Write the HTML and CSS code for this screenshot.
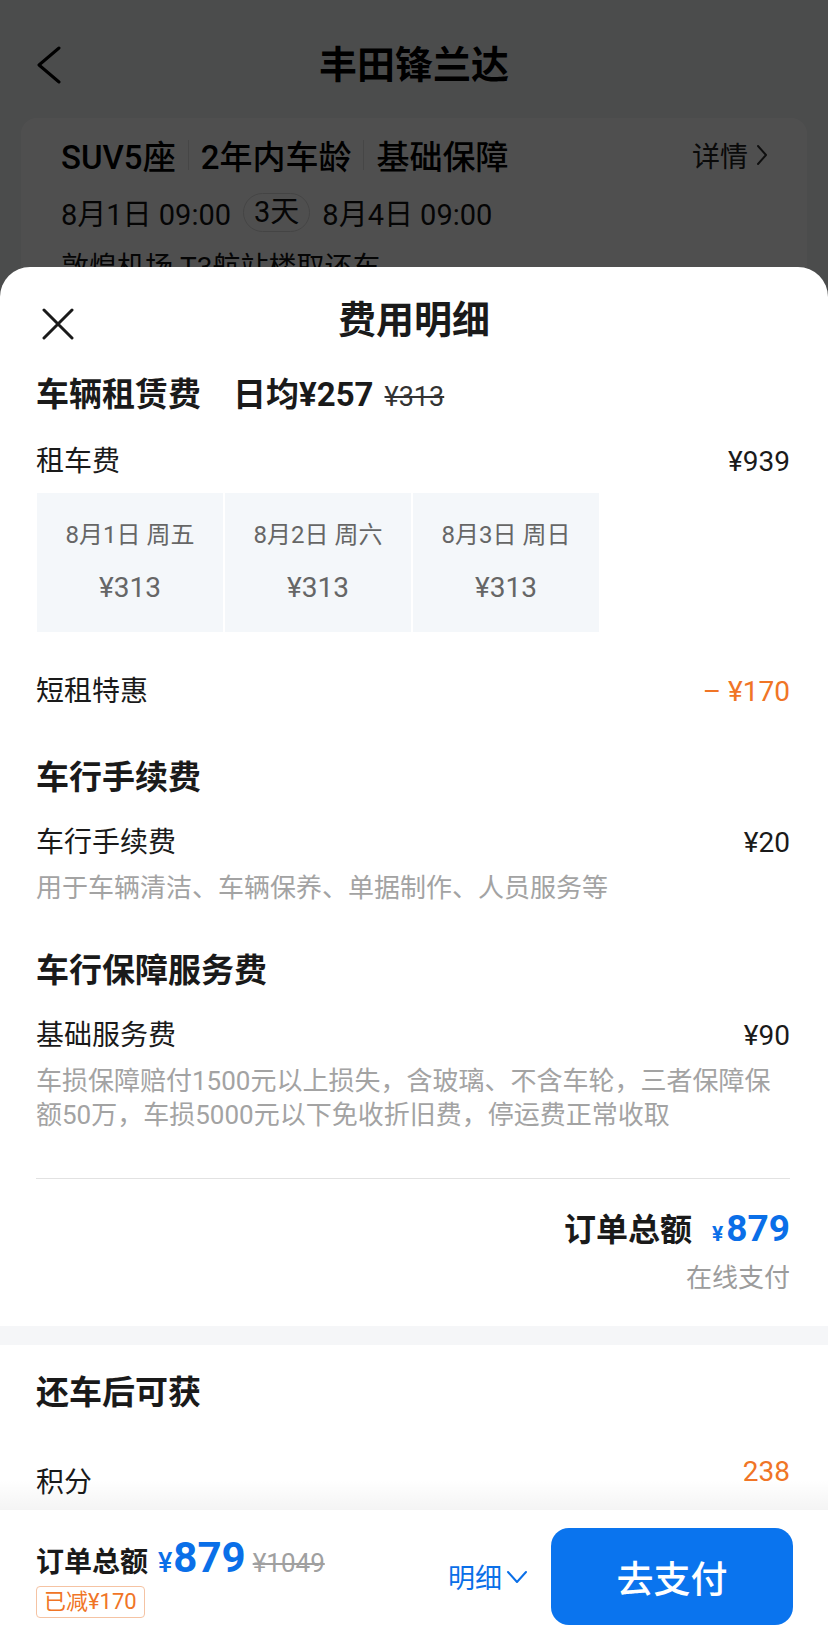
FILE: index.html
```html
<!DOCTYPE html>
<html lang="zh-CN">
<head>
<meta charset="utf-8">
<title>费用明细</title>
<link rel="stylesheet" href="styles.css">
</head>
<body>
<div class="screen">
  <div class="page">
    <header class="nav">
      <svg class="nav-back" viewBox="0 0 26 38" fill="none" stroke="#000" stroke-width="3" stroke-linecap="round" stroke-linejoin="round"><path d="M23 2 L3 19 L23 36"/></svg>
      <h1 class="nav-title">丰田锋兰达</h1>
      <span></span>
    </header>
    <section class="car-card">
      <div class="car-tags">
        <span>SUV5座</span><i class="sep"></i><span>2年内车龄</span><i class="sep"></i><span>基础保障</span>
        <span class="detail">详情<svg class="detail-arrow" viewBox="0 0 12 22" fill="none" stroke="#333" stroke-width="2" stroke-linecap="round" stroke-linejoin="round"><path d="M2 2 L10 11 L2 20"/></svg></span>
      </div>
      <div class="car-time">
        <span>8月1日 09:00</span><span class="days-pill">3天</span><span>8月4日 09:00</span>
      </div>
      <div class="car-place">敦煌机场 T3航站楼取还车</div>
    </section>
  </div>
  <div class="mask"></div>

  <div class="sheet">
    <div class="sheet-head">
      <svg class="close" viewBox="0 0 32 32" fill="none" stroke="#1a1a1a" stroke-width="3" stroke-linecap="round"><path d="M2 2 L30 30 M30 2 L2 30"/></svg>
      <h2 class="sheet-title">费用明细</h2>
      <span></span>
    </div>

    <div class="fees">
      <h3 class="sec-title sec-first">车辆租赁费<span class="avg">日均¥257</span><span class="orig">¥313</span></h3>
      <div class="line line-rent"><span>租车费</span><span>¥939</span></div>
      <div class="days">
        <div class="day"><div class="day-date">8月1日 周五</div><div class="day-price">¥313</div></div>
        <div class="day"><div class="day-date">8月2日 周六</div><div class="day-price">¥313</div></div>
        <div class="day"><div class="day-date">8月3日 周日</div><div class="day-price">¥313</div></div>
      </div>
      <div class="line line-discount"><span>短租特惠</span><span class="orange">– ¥170</span></div>

      <h3 class="sec-title sec-next">车行手续费</h3>
      <div class="line line-sub"><span>车行手续费</span><span>¥20</span></div>
      <p class="desc">用于车辆清洁、车辆保养、单据制作、人员服务等</p>

      <h3 class="sec-title sec-next">车行保障服务费</h3>
      <div class="line line-sub"><span>基础服务费</span><span>¥90</span></div>
      <p class="desc">车损保障赔付1500元以上损失，含玻璃、不含车轮，三者保障保额50万，车损5000元以下免收折旧费，停运费正常收取</p>

      <div class="divider"></div>
      <div class="total"><span class="total-label">订单总额</span><span class="total-yen">¥</span><span class="total-num">879</span></div>
      <div class="total-note">在线支付</div>
    </div>

    <div class="band"></div>

    <div class="fees">
      <h3 class="sec-title sec-reward">还车后可获</h3>
      <div class="line line-points"><span class="points-label">积分</span><span class="orange">238</span></div>
    </div>
  </div>

  <footer class="paybar">
    <div class="pay-info">
      <div class="pay-line"><span class="pay-label">订单总额</span><span class="pay-yen">¥</span><span class="pay-num">879</span><span class="pay-orig">¥1049</span></div>
      <span class="pay-tag">已减¥170</span>
    </div>
    <div class="pay-detail">明细<svg class="down" viewBox="0 0 22 14" fill="none" stroke="#0a6fe8" stroke-width="2" stroke-linecap="round" stroke-linejoin="round"><path d="M2 2 L11 12 L20 2"/></svg></div>
    <button class="pay-btn">去支付</button>
  </footer>
</div>
</body>
</html>
```

FILE: styles.css
```css
* { box-sizing: border-box; margin: 0; padding: 0; }
html, body { width: 828px; height: 1643px; overflow: hidden; }
body {
  font-family: "Roboto", "Noto Sans CJK SC", sans-serif;
  color: #1a1a1a;
  background: #f3f4f6;
}
.screen { position: relative; width: 828px; height: 1643px; overflow: hidden; }

/* underlying page */
.page { height: 100%; background: #f3f4f6; }
.nav {
  display: grid;
  grid-template-columns: 80px 1fr 80px;
  align-items: center;
  height: 118px;
  padding-top: 12px;
}
.nav-back { width: 26px; height: 38px; margin-left: 36px; }
.nav-title { font-size: 38px; font-weight: 700; line-height: 50px; text-align: center; color: #000; }
.car-card {
  margin: 0 21px;
  background: #fff;
  border-radius: 16px;
  padding: 15px 39px 40px 40px;
}
.car-tags { display: flex; align-items: center; height: 44px; font-size: 33px; font-weight: 500; color: #000; }
.sep { display: block; width: 1px; height: 30px; background: #e2e2e2; margin: 0 12px; }
.detail { margin-left: auto; display: flex; align-items: center; font-size: 28px; font-weight: 400; color: #222; }
.detail-arrow { width: 12px; height: 22px; margin-left: 8px; }
.car-time { display: flex; align-items: center; height: 40px; margin-top: 15px; font-size: 29px; color: #111; }
.days-pill {
  height: 39px; line-height: 37px; padding: 0 10px; margin: 0 12px;
  border: 1px solid #dcdcdc; border-radius: 20px;
}
.car-place { margin-top: 16px; font-size: 28px; line-height: 40px; color: #111; }

.mask { position: absolute; inset: 0; background: rgba(0, 0, 0, 0.69); }

/* sheet */
.sheet {
  position: absolute;
  top: 267px; left: 0; right: 0; bottom: 0;
  background: #fff;
  border-radius: 30px 30px 0 0;
}
.sheet-head {
  display: grid;
  grid-template-columns: 80px 1fr 80px;
  padding-top: 33px;
}
.close { width: 32px; height: 32px; margin: 8px 0 0 42px; }
.sheet-title { font-size: 38px; font-weight: 700; line-height: 40px; text-align: center; }

.fees { padding: 0 38px 0 36px; }
.sec-title { font-size: 33px; font-weight: 700; line-height: 44px; display: flex; align-items: baseline; }
.sec-first { margin-top: 33px; }
.sec-next { margin-top: 44px; }
.sec-reward { margin-top: 26px; }
.avg { margin-left: 32px; }
.orig { margin-left: 11px; font-size: 27px; font-weight: 400; color: #333; text-decoration: line-through; }

.line { display: flex; justify-content: space-between; font-size: 28px; line-height: 40px; }
.line-rent { margin-top: 23px; }
.line-discount { margin-top: 40px; }
.line-sub { margin-top: 23px; }
.line-points { margin-top: 37px; align-items: flex-start; }
.points-label { margin-top: 11px; }
.orange { color: #f07526; }

.days { display: flex; gap: 2px; margin-top: 11px; padding-left: 1px; }
.day {
  width: 186px; height: 139px;
  background: #f4f7fa;
  text-align: center;
  padding-top: 25px;
  color: #666;
}
.day-date { font-size: 24px; line-height: 34px; }
.day-price { font-size: 28px; line-height: 40px; margin-top: 16px; }

.desc { margin-top: 8px; font-size: 26px; line-height: 34px; color: #a3a3a3; }

.divider { margin-top: 46px; height: 1px; background: #e2e2e2; }
.total { display: flex; justify-content: flex-end; align-items: baseline; margin-top: 25px; line-height: 50px; }
.total-label { font-size: 32px; font-weight: 700; }
.total-yen { font-size: 21px; font-weight: 700; color: #0a6fe8; margin-left: 20px; }
.total-num { font-size: 37px; font-weight: 700; color: #0a6fe8; margin-left: 3px; }
.total-note { margin-top: 2px; text-align: right; font-size: 26px; line-height: 34px; color: #9c9c9c; }

.band { margin-top: 31px; height: 19px; background: #f5f6f8; }

/* pay bar */
.paybar {
  position: absolute;
  left: 0; right: 0; bottom: 0;
  height: 133px;
  background: #fff;
  display: flex;
  align-items: center;
  padding: 0 35px 0 36px;
}
.paybar::before {
  content: "";
  position: absolute;
  left: 0; right: 0; top: -30px; height: 30px;
  background: linear-gradient(to bottom, rgba(0, 0, 0, 0), rgba(0, 0, 0, 0.045));
}
.pay-info { display: flex; flex-direction: column; align-items: flex-start; }
.pay-line { display: flex; align-items: baseline; line-height: 46px; }
.pay-label { font-size: 28px; font-weight: 700; }
.pay-yen { font-size: 27px; font-weight: 500; color: #0a6fe8; margin-left: 10px; }
.pay-num { font-size: 42px; font-weight: 700; color: #0a6fe8; margin-left: 1px; }
.pay-orig { font-size: 26px; color: #a0a0a0; text-decoration: line-through; margin-left: 7px; }
.pay-tag {
  height: 32px; line-height: 30px;
  padding: 0 7px;
  font-size: 22px;
  color: #f07526;
  border: 1px solid #f5c3a3;
  border-radius: 4px;
}
.pay-detail { margin-left: auto; display: flex; align-items: center; font-size: 27px; color: #0a6fe8; }
.down { width: 22px; height: 14px; margin-left: 4px; }
.pay-btn {
  margin-left: 23px;
  width: 242px; height: 97px;
  border: none;
  border-radius: 18px;
  background: #0a74ee;
  color: #fff;
  font-family: "Roboto", "Noto Sans CJK SC", sans-serif;
  font-size: 37px;
  font-weight: 500;
}
```
